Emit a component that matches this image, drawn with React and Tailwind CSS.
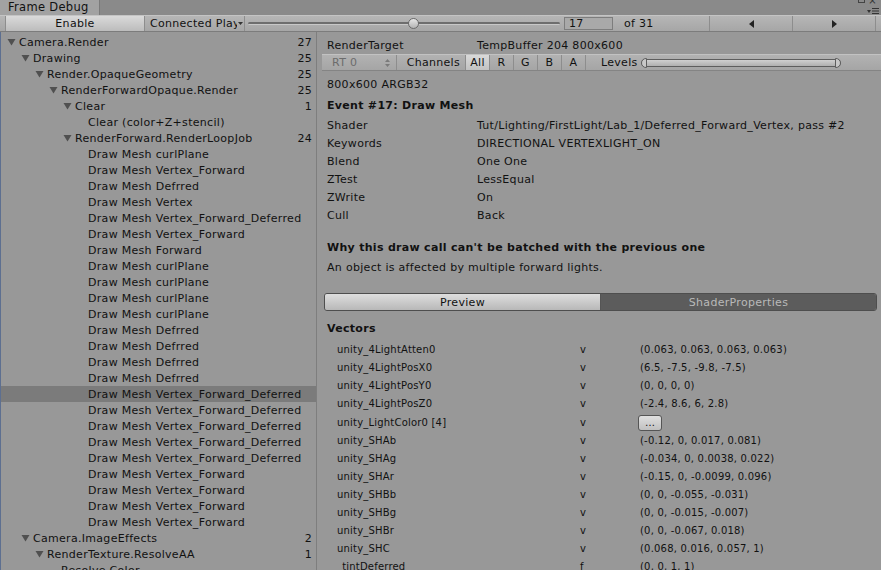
import React from 'react';

const tree = [
  [0, 'Camera.Render', 27, true],
  [1, 'Drawing', 25, true],
  [2, 'Render.OpaqueGeometry', 25, true],
  [3, 'RenderForwardOpaque.Render', 25, true],
  [4, 'Clear', 1, true],
  [5, 'Clear (color+Z+stencil)'],
  [4, 'RenderForward.RenderLoopJob', 24, true],
  [5, 'Draw Mesh curlPlane'],
  [5, 'Draw Mesh Vertex_Forward'],
  [5, 'Draw Mesh Defrred'],
  [5, 'Draw Mesh Vertex'],
  [5, 'Draw Mesh Vertex_Forward_Deferred'],
  [5, 'Draw Mesh Vertex_Forward'],
  [5, 'Draw Mesh Forward'],
  [5, 'Draw Mesh curlPlane'],
  [5, 'Draw Mesh curlPlane'],
  [5, 'Draw Mesh curlPlane'],
  [5, 'Draw Mesh curlPlane'],
  [5, 'Draw Mesh Defrred'],
  [5, 'Draw Mesh Defrred'],
  [5, 'Draw Mesh Defrred'],
  [5, 'Draw Mesh Defrred'],
  [5, 'Draw Mesh Vertex_Forward_Deferred', null, false, true],
  [5, 'Draw Mesh Vertex_Forward_Deferred'],
  [5, 'Draw Mesh Vertex_Forward_Deferred'],
  [5, 'Draw Mesh Vertex_Forward_Deferred'],
  [5, 'Draw Mesh Vertex_Forward_Deferred'],
  [5, 'Draw Mesh Vertex_Forward'],
  [5, 'Draw Mesh Vertex_Forward'],
  [5, 'Draw Mesh Vertex_Forward'],
  [5, 'Draw Mesh Vertex_Forward'],
  [1, 'Camera.ImageEffects', 2, true],
  [2, 'RenderTexture.ResolveAA', 1, true],
  [3, 'Resolve Color'],
];

const props = [
  ['Shader', 'Tut/Lighting/FirstLight/Lab_1/Deferred_Forward_Vertex, pass #2'],
  ['Keywords', 'DIRECTIONAL VERTEXLIGHT_ON'],
  ['Blend', 'One One'],
  ['ZTest', 'LessEqual'],
  ['ZWrite', 'On'],
  ['Cull', 'Back'],
];

const vectors = [
  ['unity_4LightAtten0', 'v', '(0.063, 0.063, 0.063, 0.063)'],
  ['unity_4LightPosX0', 'v', '(6.5, -7.5, -9.8, -7.5)'],
  ['unity_4LightPosY0', 'v', '(0, 0, 0, 0)'],
  ['unity_4LightPosZ0', 'v', '(-2.4, 8.6, 6, 2.8)'],
  ['unity_LightColor0 [4]', 'v', null],
  ['unity_SHAb', 'v', '(-0.12, 0, 0.017, 0.081)'],
  ['unity_SHAg', 'v', '(-0.034, 0, 0.0038, 0.022)'],
  ['unity_SHAr', 'v', '(-0.15, 0, -0.0099, 0.096)'],
  ['unity_SHBb', 'v', '(0, 0, -0.055, -0.031)'],
  ['unity_SHBg', 'v', '(0, 0, -0.015, -0.007)'],
  ['unity_SHBr', 'v', '(0, 0, -0.067, 0.018)'],
  ['unity_SHC', 'v', '(0.068, 0.016, 0.057, 1)'],
  ['_tintDeferred', 'f', '(0, 0, 1, 1)'],
];

const Tri = () => (
  <svg width="9" height="8" viewBox="0 0 9 8" className="shrink-0">
    <path d="M0.5 1 L8.5 1 L4.5 7.5 Z" fill="#505050" />
  </svg>
);

function TreeRow({ level, label, count, tri, sel }) {
  const pads = ['pl-[6px]', 'pl-[20px]', 'pl-[34px]', 'pl-[48px]', 'pl-[62px]', 'pl-[76px]'];
  const padsNo = ['pl-[18px]', 'pl-[32px]', 'pl-[46px]', 'pl-[60px]', 'pl-[74px]', 'pl-[87px]'];
  return (
    <div
      className={
        'h-[16px] flex items-center pr-[4px] ' +
        (tri ? pads[level] : padsNo[level]) +
        (sel ? ' bg-[#7b7b7b]' : '')
      }
    >
      {tri && <Tri />}
      <span className={'flex-1 whitespace-nowrap ' + (tri ? 'ml-[3px]' : '')}>{label}</span>
      {count != null && <span className="text-right">{count}</span>}
    </div>
  );
}

export default function App() {
  return (
    <div className="w-[881px] h-[570px] overflow-hidden bg-[#989898] text-[#111] font-['DejaVu_Sans',sans-serif] text-[11px] tracking-[0.3px] leading-none flex flex-col">
      {/* Tab bar */}
      <div className="h-[15px] bg-[#8a8a8a] flex items-end relative shrink-0">
        <div className="w-[100px] h-[15px] bg-[#a2a2a2] border-r border-[#7a7a7a] flex items-center pl-[8px] text-[11.5px] text-[#111]">
          Frame Debug
        </div>
        <div className="absolute right-[4px] top-[-4px] flex gap-[3px] items-start text-[#333]">
          <div className="w-[7px] h-[6px] border border-[#444] mt-[1px]" />
          <span className="text-[10px] leading-none">×</span>
        </div>
        <div className="absolute right-[2px] top-[8px] flex items-center gap-[1px]">
          <svg width="4" height="3" viewBox="0 0 4 3"><path d="M0 0 L4 0 L2 3 Z" fill="#333" /></svg>
          <svg width="7" height="6" viewBox="0 0 7 6"><path d="M0 0.5 H7 M0 3 H7 M0 5.5 H7" stroke="#333" strokeWidth="1" /></svg>
        </div>
      </div>
      {/* Toolbar */}
      <div className="h-[17px] shrink-0 bg-gradient-to-b from-[#b6b6b6] to-[#a6a6a6] border-t border-[#c4c4c4] border-b border-b-[#7c7c7c] flex items-stretch">
        <div className="w-[5px]" />
        <div className="w-[140px] bg-gradient-to-b from-[#dadada] to-[#bcbcbc] border-x border-[#8d8d8d] flex items-center justify-center">
          Enable
        </div>
        <div className="w-[100px] border-r border-[#8d8d8d] flex items-center pl-[5px] overflow-hidden whitespace-nowrap">
          <span className="w-[87px] overflow-hidden">Connected Player</span>
          <svg width="5" height="3" viewBox="0 0 5 3" className="ml-[1px]"><path d="M0 0 L5 0 L2.5 3 Z" fill="#333" /></svg>
        </div>
        <div className="w-[318px] relative flex items-center pl-[3px]">
          <div className="w-[312px] h-[3px] bg-[#6e6e6e] rounded-full border-b border-[#c8c8c8]" />
          <div className="absolute left-[163px] top-[2px] w-[11px] h-[11px] rounded-full bg-gradient-to-b from-[#e6e6e6] to-[#b4b4b4] border border-[#6a6a6a]" />
        </div>
        <div className="w-[49px] my-[1px] ml-[1px] bg-[#a9a9a9] border border-[#7d7d7d] flex items-center pl-[4px]">17</div>
        <div className="w-[97px] border-r border-[#8d8d8d] flex items-center pl-[11px]">of 31</div>
        <div className="w-[83px] border-r border-[#8d8d8d] flex items-center justify-center">
          <svg width="5" height="8" viewBox="0 0 5 8"><path d="M5 0 L0 4 L5 8 Z" fill="#222" /></svg>
        </div>
        <div className="w-[83px] border-r border-[#8d8d8d] flex items-center justify-center">
          <svg width="5" height="8" viewBox="0 0 5 8"><path d="M0 0 L5 4 L0 8 Z" fill="#222" /></svg>
        </div>
      </div>
      {/* Body */}
      <div className="flex-1 flex min-h-0">
        {/* Left tree */}
        <div className="w-[317px] shrink-0 border-l border-[#5d6f90] border-r border-r-[#7e7e7e] pt-[2px] overflow-hidden">
          {tree.map((r, i) => (
            <TreeRow key={i} level={r[0]} label={r[1]} count={r[2]} tri={r[3]} sel={r[4]} />
          ))}
        </div>
        {/* Right panel */}
        <div className="flex-1 min-w-0 pl-[5px] overflow-hidden">
          <div className="h-[22px] flex items-end pb-[3px] pl-[5px]">
            <span className="w-[150px]">RenderTarget</span>
            <span>TempBuffer 204 800x600</span>
          </div>
          <div className="h-[17px] bg-gradient-to-b from-[#b2b2b2] to-[#a5a5a5] border-t border-[#c2c2c2] border-b border-b-[#848484] flex items-stretch">
            <div className="ml-[5px] w-[70px] border-r border-[#8d8d8d] flex items-center justify-between pl-[5px] pr-[6px] text-[#6c6c6c]">
              <span>RT 0</span>
              <svg width="5" height="8" viewBox="0 0 5 8"><path d="M0 3 L2.5 0 L5 3 Z M0 5 L2.5 8 L5 5 Z" fill="#7a7a7a" /></svg>
            </div>
            <div className="w-[68px] flex items-center justify-end pr-[5px]">Channels</div>
            <div className="w-[25px] bg-gradient-to-b from-[#d9d9d9] to-[#c2c2c2] border-x border-[#8d8d8d] flex items-center justify-center">All</div>
            <div className="w-[24px] border-r border-[#8d8d8d] flex items-center justify-center">R</div>
            <div className="w-[24px] border-r border-[#8d8d8d] flex items-center justify-center">G</div>
            <div className="w-[24px] border-r border-[#8d8d8d] flex items-center justify-center">B</div>
            <div className="w-[24px] border-r border-[#8d8d8d] flex items-center justify-center">A</div>
            <div className="w-[55px] flex items-center pl-[15px]">Levels</div>
            <div className="flex items-center">
              <div className="w-[200px] h-[8px] rounded-full bg-gradient-to-b from-[#d0d0d0] to-[#b0b0b0] border border-[#5e5e5e] relative">
                <div className="absolute left-[-1px] top-[-2px] w-[6px] h-[10px] rounded-l-full border border-[#5e5e5e] bg-[#c8c8c8]" />
                <div className="absolute right-[-1px] top-[-2px] w-[6px] h-[10px] rounded-r-full border border-[#5e5e5e] bg-[#c8c8c8]" />
              </div>
            </div>
          </div>
          <div className="pl-[5px]">
            <div className="h-[22px] flex items-center pt-[4px]">800x600 ARGB32</div>
            <div className="h-[23px] flex items-center pt-[2px] font-bold">Event #17: Draw Mesh</div>
            {props.map(([k, v]) => (
              <div key={k} className="h-[18px] flex items-center">
                <span className="w-[150px]">{k}</span>
                <span className="whitespace-nowrap">{v}</span>
              </div>
            ))}
            <div className="h-[13px]" />
            <div className="h-[20px] flex items-center font-bold">Why this draw call can't be batched with the previous one</div>
            <div className="h-[20px] flex items-center">An object is affected by multiple forward lights.</div>
          </div>
          <div className="h-[16px]" />
          <div className="ml-[2px] w-[553px] h-[18px] flex rounded-[3px] border border-[#4e4e4e] overflow-hidden">
            <div className="w-[276px] bg-gradient-to-b from-[#dedede] to-[#b8b8b8] border-r border-[#555] flex items-center justify-center">Preview</div>
            <div className="flex-1 bg-[#5c5c5c] flex items-center justify-center text-[#b9b9b9]">ShaderProperties</div>
          </div>
          <div className="pl-[5px]">
            <div className="h-[24px] flex items-end pb-[1px] font-bold">Vectors</div>
            <div className="h-[6px]" />
            {vectors.map(([n, t, v]) => (
              <div key={n} className={(v ? 'h-[18px]' : 'h-[19px]') + ' flex items-center text-[10px] tracking-[0.2px]'}>
                <span className="w-[253px] pl-[10px] whitespace-nowrap">{n}</span>
                <span className="w-[60px]">{t}</span>
                {v ? (
                  <span className="whitespace-nowrap">{v}</span>
                ) : (
                  <div className="w-[24px] h-[16px] -ml-[2px] rounded-[3px] border border-[#555] bg-gradient-to-b from-[#e0e0e0] to-[#c0c0c0] flex items-center justify-center text-[10px]">…</div>
                )}
              </div>
            ))}
          </div>
        </div>
      </div>
    </div>
  );
}
